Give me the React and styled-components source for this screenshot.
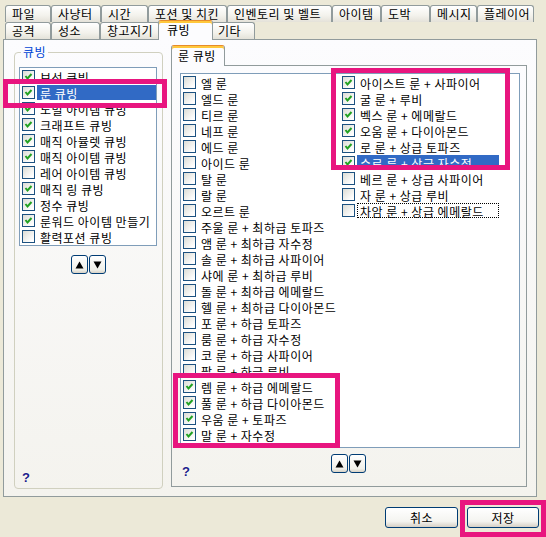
import React from "react";
import styled, { createGlobalStyle, css } from "styled-components";

const GlobalStyle = createGlobalStyle`
  html, body {
    margin: 0;
    padding: 0;
    background: #ece9d8;
  }
  body {
    font-family: "Noto Sans CJK KR", "Noto Sans", sans-serif;
    font-size: 12px;
    letter-spacing: 0.5px;
    color: #000;
  }
`;

const Window = styled.div`
  position: relative;
  box-sizing: border-box;
  width: 546px;
  height: 537px;
  padding: 5px 9px 0 3px;
  background: #ece9d8;
  overflow: hidden;
`;

const TabRow = styled.div`
  display: flex;
  height: 17px;
  padding-left: 2px;
`;

const Tab = styled.div`
  box-sizing: border-box;
  flex: none;
  width: ${(p) => p.$w}px;
  height: 17px;
  padding-left: 6px;
  border: 1px solid #919b9c;
  border-bottom: none;
  border-radius: 3px 3px 0 0;
  background: linear-gradient(#ffffff, #f3f2ec 60%, #e4e2d9);
  line-height: 15px;
  white-space: nowrap;

  ${(p) =>
    p.$active &&
    css`
      position: relative;
      z-index: 1;
      width: ${p.$w + 4}px;
      height: 20px;
      margin: -2px -2px 0;
      padding-left: 8px;
      background: #fcfcfe;
      border-top: 1px solid #e68b2c;
      box-shadow: inset 0 2px 0 #ffc83c;
      line-height: 18px;
    `}
`;

const TabPage = styled.div`
  box-sizing: border-box;
  display: flex;
  gap: 8px;
  height: 458px;
  padding: 5px 9px 7px 10px;
  border: 1px solid #919b9c;
  background: linear-gradient(#fcfcfe, #f4f3ee);
`;

const GroupBox = styled.fieldset`
  box-sizing: border-box;
  display: flex;
  flex-direction: column;
  width: 149px;
  margin: 0;
  padding: 0 5px 4px 4px;
  border: 1px solid #d0d0bf;
  border-radius: 4px;
  min-width: 0;
`;

const Legend = styled.legend`
  margin-left: 2px;
  padding: 0 2px;
  color: #0046d5;
  line-height: 14px;
`;

const ListBox = styled.div`
  box-sizing: border-box;
  height: ${(p) => p.$h}px;
  margin-top: ${(p) => p.$top || 0}px;
  border: 1px solid #7f9db9;
  background: #fff;
`;

const ColumnList = styled.div`
  display: grid;
  grid-template-rows: repeat(23, 16px);
  grid-auto-flow: column;
  grid-auto-columns: 159px;
`;

const Item = styled.div`
  display: flex;
  align-items: center;
  gap: 2px;
  height: 16px;
  padding-left: 2px;
  white-space: nowrap;
`;

const Label = styled.span`
  box-sizing: border-box;
  flex: 1;
  height: 15px;
  padding: 0 2px;
  line-height: 15px;
  border: 1px dotted transparent;
  ${(p) =>
    p.$selected &&
    css`
      background: #316ac5;
      color: #fff;
    `}
  ${(p) =>
    p.$focus &&
    css`
      border-color: #000;
    `}
`;

const Box = styled.span`
  box-sizing: border-box;
  flex: none;
  display: flex;
  align-items: center;
  justify-content: center;
  width: 13px;
  height: 13px;
  border: 1px solid #1c5180;
  background: linear-gradient(135deg, #dcdcd5, #ffffff 85%);
`;

const ArrowRow = styled.div`
  display: flex;
  justify-content: center;
  gap: 1px;
  margin-top: ${(p) => p.$top || 0}px;
`;

const ArrowButton = styled.div`
  box-sizing: border-box;
  display: flex;
  align-items: center;
  justify-content: center;
  width: 17px;
  height: 19px;
  border: 1px solid #003c74;
  border-radius: 3px;
  background: linear-gradient(#ffffff, #f0f0ea 80%, #d8d2c6);
`;

const Help = styled.span`
  margin: auto 0 0 3px;
  font-family: "Liberation Sans", Arial, sans-serif;
  font-weight: bold;
  font-size: 13px;
  line-height: 13px;
  color: #1c1c8c;
  text-shadow: 0 0 2px #fff, 0 0 3px #fffbe0;
`;

const RightColumn = styled.div`
  display: flex;
  flex-direction: column;
  width: 356px;
  margin-bottom: 2px;
`;

const InnerTab = styled(Tab)`
  margin: 0 0 -1px 0;
  width: 54px;
  height: 21px;
  padding-left: 6px;
  line-height: 19px;
`;

const InnerPanel = styled.div`
  box-sizing: border-box;
  flex: 1;
  display: flex;
  flex-direction: column;
  padding: 7px 6px 8px 8px;
  border: 1px solid #919b9c;
  background: linear-gradient(#fcfcfe, #f4f3ee);
`;

const PanelFooter = styled.div`
  display: grid;
  grid-template-columns: 1fr auto 1fr;
  margin-top: 6px;
  flex: 1;
`;

const FooterHelp = styled(Help)`
  align-self: end;
  margin: 0 0 0 2px;
`;

const FooterArrows = styled(ArrowRow)`
  align-self: start;
  margin-left: -3px;
`;

const ButtonRow = styled.div`
  display: flex;
  justify-content: flex-end;
  gap: 9px;
  margin: 10px -2px 0 0;
`;

const Button = styled.button`
  box-sizing: border-box;
  width: ${(p) => p.$w}px;
  height: 21px;
  padding: 0;
  border: 1px solid #003c74;
  border-radius: 3px;
  background: linear-gradient(#ffffff, #f4f4f0 70%, #d6d0c5);
  font-family: "Noto Sans CJK KR", sans-serif;
  font-size: 12px;
  letter-spacing: 0.5px;
  line-height: 19px;
  color: #000;
`;

const Mark = styled.div`
  position: absolute;
  box-sizing: border-box;
  border: 5px solid #e8157f;
  pointer-events: none;
`;

const Check = ({ on }) => (
  <Box>
    {on && (
      <svg width="9" height="9" viewBox="0 0 9 9">
        <polyline points="1.5,4 3.5,6.5 7.5,2" fill="none" stroke="#21a121" strokeWidth="2" />
      </svg>
    )}
  </Box>
);

const Up = () => (
  <svg width="9" height="8" viewBox="0 0 9 8">
    <polygon points="4.5,0.5 8.5,7.5 0.5,7.5" fill="#000" />
  </svg>
);

const Down = () => (
  <svg width="9" height="8" viewBox="0 0 9 8">
    <polygon points="0.5,0.5 8.5,0.5 4.5,7.5" fill="#000" />
  </svg>
);

const topTabs = [
  ["파일", 46],
  ["사냥터", 50],
  ["시간", 47],
  ["포션 및 치킨", 79],
  ["인벤토리 및 벨트", 105],
  ["아이템", 49],
  ["도박", 49],
  ["메시지", 47],
  ["플레이어", 57],
];

const bottomTabs = [
  ["공격", 46],
  ["성소", 49],
  ["창고지기", 60],
  ["큐빙", 51, true],
  ["기타", 44],
];

const cubeItems = [
  { text: "보석 큐빙", on: true },
  { text: "룬 큐빙", on: true, selected: true },
  { text: "노멀 아이템 큐빙", on: true },
  { text: "크래프트 큐빙", on: true },
  { text: "매직 아뮬렛 큐빙", on: true },
  { text: "매직 아이템 큐빙", on: true },
  { text: "레어 아이템 큐빙", on: false },
  { text: "매직 링 큐빙", on: true },
  { text: "정수 큐빙", on: true },
  { text: "룬워드 아이템 만들기", on: true },
  { text: "활력포션 큐빙", on: false },
];

const runeItems = [
  { text: "엘 룬" },
  { text: "엘드 룬" },
  { text: "티르 룬" },
  { text: "네프 룬" },
  { text: "에드 룬" },
  { text: "아이드 룬" },
  { text: "탈 룬" },
  { text: "랄 룬" },
  { text: "오르트 룬" },
  { text: "주울 룬 + 최하급 토파즈" },
  { text: "앰 룬 + 최하급 자수정" },
  { text: "솔 룬 + 최하급 사파이어" },
  { text: "샤에 룬 + 최하급 루비" },
  { text: "돌 룬 + 최하급 에메랄드" },
  { text: "헬 룬 + 최하급 다이아몬드" },
  { text: "포 룬 + 하급 토파즈" },
  { text: "룸 룬 + 하급 자수정" },
  { text: "코 룬 + 하급 사파이어" },
  { text: "팔 룬 + 하급 루비" },
  { text: "렘 룬 + 하급 에메랄드", on: true },
  { text: "풀 룬 + 하급 다이아몬드", on: true },
  { text: "우움 룬 + 토파즈", on: true },
  { text: "말 룬 + 자수정", on: true },
  { text: "아이스트 룬 + 사파이어", on: true },
  { text: "굴 룬 + 루비", on: true },
  { text: "벡스 룬 + 에메랄드", on: true },
  { text: "오움 룬 + 다이아몬드", on: true },
  { text: "로 룬 + 상급 토파즈", on: true },
  { text: "수르 룬 + 상급 자수정", on: true, selected: true },
  { text: "베르 룬 + 상급 사파이어" },
  { text: "자 룬 + 상급 루비" },
  { text: "차암 룬 + 상급 에메랄드", focus: true },
];

const marks = [
  { left: 3, top: 79, width: 164, height: 29 },
  { left: 331, top: 68, width: 179, height: 102 },
  { left: 173, top: 373, width: 167, height: 75 },
  { left: 460, top: 500, width: 86, height: 37 },
];

const ListRow = ({ item }) => (
  <Item>
    <Check on={item.on} />
    <Label $selected={item.selected} $focus={item.focus}>
      {item.text}
    </Label>
  </Item>
);

export default function App() {
  return (
    <Window>
      <GlobalStyle />
      <TabRow>
        {topTabs.map(([t, w]) => (
          <Tab key={t} $w={w}>
            {t}
          </Tab>
        ))}
      </TabRow>
      <TabRow>
        {bottomTabs.map(([t, w, a]) => (
          <Tab key={t} $w={w} $active={a}>
            {t}
          </Tab>
        ))}
      </TabRow>

      <TabPage>
        <GroupBox>
          <Legend>큐빙</Legend>
          <ListBox $h={179} $top={8}>
            {cubeItems.map((it) => (
              <ListRow key={it.text} item={it} />
            ))}
          </ListBox>
          <ArrowRow $top={9}>
            <ArrowButton>
              <Up />
            </ArrowButton>
            <ArrowButton>
              <Down />
            </ArrowButton>
          </ArrowRow>
          <Help>?</Help>
        </GroupBox>

        <RightColumn>
          <InnerTab $active $w={54}>
            룬 큐빙
          </InnerTab>
          <InnerPanel>
            <ListBox $h={375}>
              <ColumnList>
                {runeItems.map((it) => (
                  <ListRow key={it.text} item={it} />
                ))}
              </ColumnList>
            </ListBox>
            <PanelFooter>
              <FooterHelp>?</FooterHelp>
              <FooterArrows>
                <ArrowButton>
                  <Up />
                </ArrowButton>
                <ArrowButton>
                  <Down />
                </ArrowButton>
              </FooterArrows>
              <span />
            </PanelFooter>
          </InnerPanel>
        </RightColumn>
      </TabPage>

      <ButtonRow>
        <Button $w={73}>취소</Button>
        <Button $w={72}>저장</Button>
      </ButtonRow>

      {marks.map((m, i) => (
        <Mark key={i} style={m} />
      ))}
    </Window>
  );
}
